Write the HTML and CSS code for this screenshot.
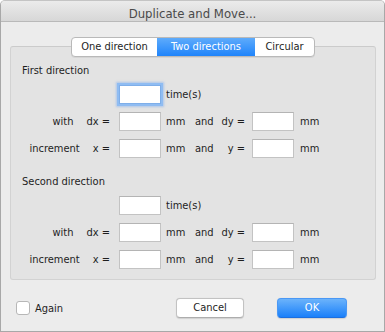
FILE: index.html
```html
<!DOCTYPE html>
<html>
<head>
<meta charset="utf-8">
<link rel="stylesheet" href="styles.css">
</head>
<body>
<div class="window">
  <div class="titlebar">Duplicate and Move...</div>
  <div class="content">
    <div class="tabs">
      <div class="seg seg-one">One direction</div>
      <div class="seg seg-sel">Two directions</div>
      <div class="seg seg-last">Circular</div>
    </div>
    <div class="panel">
      <div class="section">
        <div class="head">First direction</div>
        <div class="row">
          <div class="lbl"></div>
          <div class="field focus"></div>
          <div class="unit">time(s)</div>
        </div>
        <div class="row">
          <div class="lbl"><span>with</span><span>dx =</span></div>
          <div class="field"></div>
          <div class="unit">mm</div>
          <div class="and">and</div>
          <div class="lbl2">dy =</div>
          <div class="field"></div>
          <div class="unit2">mm</div>
        </div>
        <div class="row">
          <div class="lbl"><span>increment</span><span>x =</span></div>
          <div class="field"></div>
          <div class="unit">mm</div>
          <div class="and">and</div>
          <div class="lbl2">y =</div>
          <div class="field"></div>
          <div class="unit2">mm</div>
        </div>
      </div>
      <div class="section second">
        <div class="head">Second direction</div>
        <div class="row">
          <div class="lbl"></div>
          <div class="field"></div>
          <div class="unit">time(s)</div>
        </div>
        <div class="row">
          <div class="lbl"><span>with</span><span>dx =</span></div>
          <div class="field"></div>
          <div class="unit">mm</div>
          <div class="and">and</div>
          <div class="lbl2">dy =</div>
          <div class="field"></div>
          <div class="unit2">mm</div>
        </div>
        <div class="row">
          <div class="lbl"><span>increment</span><span>x =</span></div>
          <div class="field"></div>
          <div class="unit">mm</div>
          <div class="and">and</div>
          <div class="lbl2">y =</div>
          <div class="field"></div>
          <div class="unit2">mm</div>
        </div>
      </div>
    </div>
    <div class="footer">
      <div class="check"><span class="box"></span><span class="check-text">Again</span></div>
      <div class="buttons">
        <div class="btn">Cancel</div>
        <div class="btn btn-ok">OK</div>
      </div>
    </div>
  </div>
</div>
</body>
</html>
```
FILE: styles.css
```css
html, body {
  margin: 0;
  padding: 0;
  background: #ffffff;
}
body {
  font-family: "DejaVu Sans Condensed", "DejaVu Sans", sans-serif;
  font-stretch: condensed;
  font-size: 11px;
  color: #1e1e1e;
}
.window {
  width: 385px;
  height: 332px;
  box-sizing: border-box;
  border: 1px solid #a8a8a8;
  border-top-color: #c4c4c4;
  border-radius: 5px 5px 0 0;
  background: #ececec;
  overflow: hidden;
}
.titlebar {
  height: 21px;
  box-sizing: border-box;
  padding-top: 5px;
  text-align: center;
  font-size: 13px;
  line-height: 15px;
  color: #4a4a4a;
  background: linear-gradient(#ebebeb, #d7d7d7);
  border-bottom: 1px solid #b9b9b9;
}
.content {
  padding: 15px 8px 0 9px;
}
.tabs {
  display: flex;
  width: max-content;
  margin: 0 auto -11px;
  position: relative;
  z-index: 1;
  height: 20px;
  box-sizing: border-box;
  border: 1px solid #b9b9b9;
  border-radius: 4px;
  background: #ffffff;
  box-shadow: 0 1px 0 rgba(0,0,0,0.06);
  line-height: 18px;
}
.seg {
  padding: 0;
  text-align: center;
  white-space: nowrap;
  box-sizing: border-box;
}
.seg-one {
  width: 85px;
}
.seg-sel {
  width: 98px;
  color: #ffffff;
  background: linear-gradient(#5eabfb, #1f84fb);
}
.seg-last {
  width: 59px;
}
.panel {
  box-sizing: border-box;
  height: 234px;
  border: 1px solid #d2d2d2;
  border-top-color: #cbcbcb;
  border-radius: 3px;
  background: #e3e3e3;
  padding-top: 17px;
}
.section.second {
  margin-top: 17px;
}
.head {
  padding-left: 11px;
  line-height: 14px;
  height: 14px;
  margin-bottom: 7px;
}
.row {
  display: flex;
  align-items: center;
  height: 19px;
  margin-bottom: 8px;
}
.row:last-child {
  margin-bottom: 0;
}
.lbl {
  width: 99px;
  margin-right: 9px;
  display: flex;
  justify-content: flex-end;
  gap: 13px;
}
.field {
  width: 42px;
  height: 19px;
  box-sizing: border-box;
  background: #ffffff;
  border: 1px solid #c3c3c3;
  border-top-color: #b4b4b4;
}
.field.focus {
  border-color: #7eaee9;
  box-shadow: 0 0 0 2px #8fbcf2, 0 0 2px 3px rgba(120,170,240,0.5);
}
.unit {
  margin-left: 5px;
  width: 29px;
}
.and {
  width: 22px;
}
.lbl2 {
  width: 28px;
  text-align: right;
  margin-right: 7px;
}
.unit2 {
  margin-left: 6px;
}
.footer {
  display: flex;
  align-items: center;
  margin-top: 18px;
  height: 20px;
}
.check {
  display: flex;
  align-items: center;
  padding-left: 6px;
}
.box {
  width: 14px;
  height: 14px;
  box-sizing: border-box;
  background: #ffffff;
  border: 1px solid #b7b7b7;
  border-radius: 3px;
  margin-right: 5px;
}
.buttons {
  margin-left: auto;
  margin-right: 29px;
  display: flex;
  gap: 33px;
}
.btn {
  width: 68px;
  height: 20px;
  box-sizing: border-box;
  border: 1px solid #c2c2c2;
  border-bottom-color: #adadad;
  border-radius: 4px;
  background: #ffffff;
  text-align: center;
  line-height: 18px;
  box-shadow: 0 0.5px 1px rgba(0,0,0,0.12);
}
.btn-ok {
  width: 70px;
  color: #ffffff;
  border-color: #4a98f5;
  border-bottom-color: #1b6fe0;
  background: linear-gradient(#6bb3fb, #1a80fa);
}
```
